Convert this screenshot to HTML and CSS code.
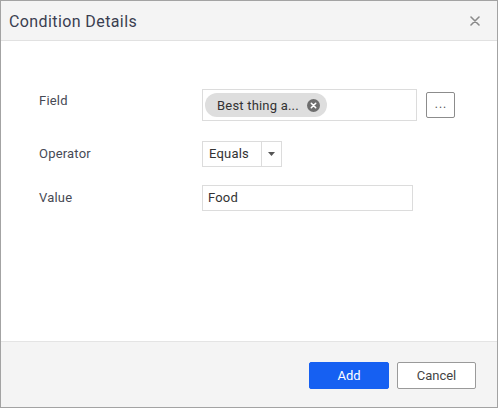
FILE: index.html
```html
<!DOCTYPE html>
<html>
<head>
<meta charset="utf-8">
<link rel="stylesheet" href="styles.css">
</head>
<body>
<div class="dialog">
  <div class="header">
    <span class="title">Condition Details</span>
    <span class="close">
      <svg width="10" height="10" viewBox="0 0 10 10"><path d="M1 1L9 9M9 1L1 9" stroke="#8a8a8a" stroke-width="1.6" stroke-linecap="round"/></svg>
    </span>
  </div>
  <div class="content">
    <div class="row row-field">
      <div class="label">Field</div>
      <div class="control">
        <div class="tagbox">
          <span class="chip">Best thing a...
            <svg class="chip-x" width="13" height="13" viewBox="0 0 13 13"><circle cx="6.5" cy="6.5" r="6.5" fill="#6e6e6e"/><path d="M4.3 4.3L8.7 8.7M8.7 4.3L4.3 8.7" stroke="#fff" stroke-width="1.6" stroke-linecap="round"/></svg>
          </span>
        </div>
        <button class="more">...</button>
      </div>
    </div>
    <div class="row row-op">
      <div class="label">Operator</div>
      <div class="control">
        <div class="select">
          <span class="select-text">Equals</span>
          <span class="select-arrow"><svg width="7" height="4" viewBox="0 0 7 4"><path d="M0 0H7L3.5 4Z" fill="#555"/></svg></span>
        </div>
      </div>
    </div>
    <div class="row row-val">
      <div class="label">Value</div>
      <div class="control">
        <div class="textbox">Food</div>
      </div>
    </div>
  </div>
  <div class="footer">
    <button class="btn btn-primary">Add</button>
    <button class="btn btn-default">Cancel</button>
  </div>
</div>
</body>
</html>
```
FILE: styles.css
```css
* { box-sizing: border-box; }
html, body { margin: 0; padding: 0; }
body {
  font-family: Roboto, "Liberation Sans", sans-serif;
  color: #3c3f4a;
  background: #fff;
}
.dialog {
  width: 498px;
  height: 408px;
  border: 1px solid #a3a3a3;
  display: flex;
  flex-direction: column;
  background: #fff;
}
.header {
  height: 40px;
  flex: 0 0 40px;
  background: #f4f4f4;
  border-bottom: 1px solid #e1e1e1;
  display: flex;
  align-items: center;
  justify-content: space-between;
  padding: 1px 17px 0 8px;
}
.title {
  font-size: 16px;
  color: #3a3e50;
  letter-spacing: 0.4px;
}
.close { display: flex; align-items: center; }
.content {
  flex: 1;
  padding: 48px 0 0 38px;
}
.row {
  display: flex;
  align-items: flex-start;
}
.label {
  width: 163px;
  font-size: 13px;
  line-height: 26px;
  color: #474a55;
  letter-spacing: 0.2px;
}
.control { display: flex; align-items: center; }
.row-field .label { line-height: 24px; }
.row-op { margin-top: 20px; }
.row-val { margin-top: 18px; }
.tagbox {
  width: 215px;
  height: 32px;
  border: 1px solid #dcdcdc;
  padding: 2px;
  display: flex;
  align-items: center;
}
.chip {
  height: 24px;
  border-radius: 12px;
  background: #dedede;
  display: flex;
  align-items: center;
  padding: 0 7px 0 12px;
  font-size: 13px;
  color: #333;
  gap: 8px;
  letter-spacing: 0.2px;
}
.more {
  margin-left: 9px;
  width: 29px;
  height: 26px;
  border: 1px solid #8c8c8c;
  border-radius: 2px;
  background: #fff;
  font-family: inherit;
  font-size: 12px;
  letter-spacing: 1px;
  color: #555;
  padding: 0 0 2px 1px;
  line-height: 20px;
}
.select {
  width: 80px;
  height: 26px;
  border: 1px solid #dcdcdc;
  display: flex;
  align-items: stretch;
  font-size: 13px;
}
.select-text {
  width: 59px;
  padding-left: 6px;
  line-height: 24px;
  color: #333;
  border-right: 1px solid #dcdcdc;
  letter-spacing: 0.2px;
}
.select-arrow {
  flex: 1;
  display: flex;
  align-items: center;
  justify-content: center;
}
.textbox {
  width: 211px;
  height: 26px;
  border: 1px solid #dcdcdc;
  padding-left: 5px;
  font-size: 13px;
  line-height: 24px;
  color: #333;
  letter-spacing: 0.2px;
}
.footer {
  flex: 0 0 66px;
  height: 66px;
  background: #f4f4f4;
  border-top: 1px solid #e4e4e4;
  display: flex;
  justify-content: flex-end;
  align-items: flex-start;
  padding: 20px 21px 0 0;
  gap: 8px;
}
.btn {
  height: 27px;
  font-family: inherit;
  font-size: 13px;
  border-radius: 2px;
  padding: 0;
}
.btn-primary {
  width: 80px;
  background: #1660f2;
  color: #fff;
  border: 1px solid #1660f2;
}
.btn-default {
  width: 79px;
  background: #fff;
  color: #444;
  border: 1px solid #9a9a9a;
}
```
